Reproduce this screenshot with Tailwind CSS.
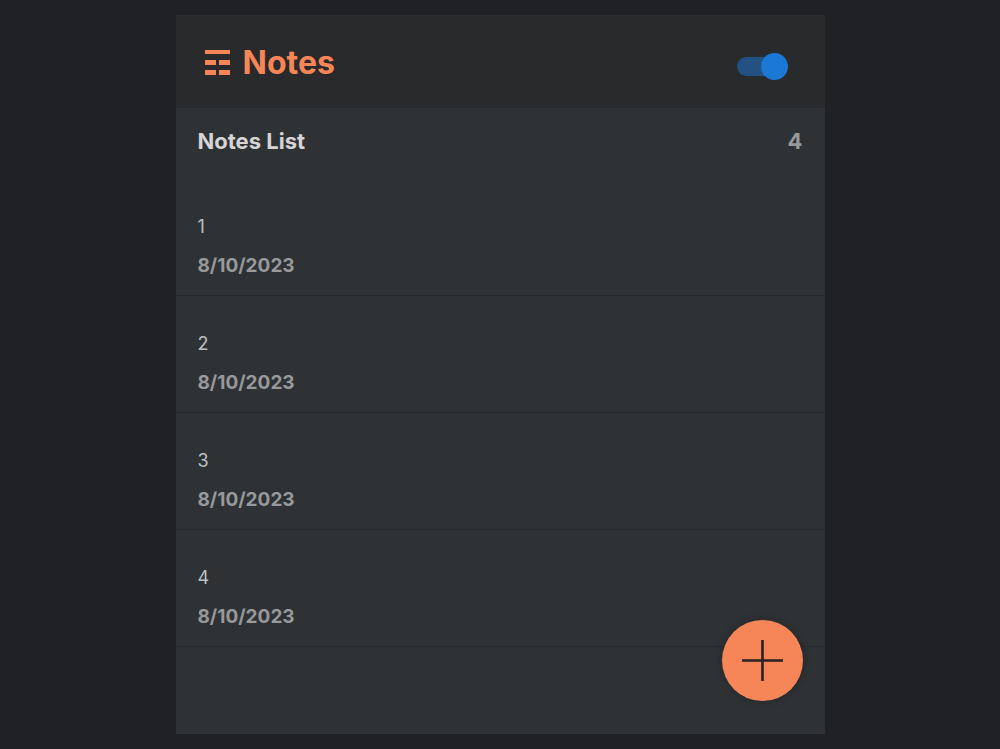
<!DOCTYPE html>
<html lang="en">

<head>
    <meta charset="UTF-8">
    <meta name="viewport" content="width=device-width, initial-scale=1.0">
    <title>Notes</title>
    <script src="https://cdn.jsdelivr.net/npm/@tailwindcss/browser@4"></script>
</head>

<body class="bg-[#1f2124] font-['Inter','Open_Sans',sans-serif] min-h-screen flex justify-center py-[15px]">
    <div class="relative w-full max-w-[649px] bg-[#2e3235] flex flex-col">
        <header class="bg-[#292a2b] h-[93px] pt-[3px] pl-7 pr-9 flex items-center justify-between">
            <h1 class="flex items-center gap-3 text-[32px] leading-10 font-bold text-[#f68657]">
                <svg class="w-[27px] h-[26px]" viewBox="0 0 27 26" fill="currentColor" aria-hidden="true">
                    <path d="M1 0h25v4H1zM1 10h11v5H1zM15 10h11v5H15zM1 20h11v5H1zM15 20h11v5H15z" />
                </svg>
                Notes
            </h1>
            <!-- Dark mode switch -->
            <label class="relative block w-[52px] h-[27px] mt-1.5 cursor-pointer">
                <input type="checkbox" id="theme-switch" checked aria-label="Dark mode"
                    class="peer absolute inset-0 w-full h-full opacity-0 cursor-pointer">
                <span class="absolute left-0 top-1 w-[48px] h-[19px] rounded-full bg-gray-600 peer-checked:bg-[#235282] pointer-events-none"></span>
                <span class="absolute left-0 top-0 size-[27px] rounded-full bg-gray-300 peer-checked:left-6 peer-checked:bg-[#1b78d6] pointer-events-none"></span>
            </label>
        </header>

        <main class="grow">
            <div class="h-[71px] pt-[19px] px-[22px] flex justify-between text-[22px] leading-7 font-bold">
                <h2 class="text-[#d6d4d5]">Notes List</h2>
                <span id="notes-count" class="text-[#97999a]">4</span>
            </div>

            <ul>
                <!-- Note -->
                <li class="px-[22px] pt-[34px] pb-[17px] border-b border-[#272a2d]">
                    <h3 class="text-lg leading-7 text-[#bcc0c4]">1</h3>
                    <p class="mt-[13px] text-[19px] leading-6 font-bold text-[#97999a]">8/10/2023</p>
                </li>
                <li class="px-[22px] pt-[34px] pb-[17px] border-b border-[#272a2d]">
                    <h3 class="text-lg leading-7 text-[#bcc0c4]">2</h3>
                    <p class="mt-[13px] text-[19px] leading-6 font-bold text-[#97999a]">8/10/2023</p>
                </li>
                <li class="px-[22px] pt-[34px] pb-[17px] border-b border-[#272a2d]">
                    <h3 class="text-lg leading-7 text-[#bcc0c4]">3</h3>
                    <p class="mt-[13px] text-[19px] leading-6 font-bold text-[#97999a]">8/10/2023</p>
                </li>
                <li class="px-[22px] pt-[34px] pb-[17px] border-b border-[#272a2d]">
                    <h3 class="text-lg leading-7 text-[#bcc0c4]">4</h3>
                    <p class="mt-[13px] text-[19px] leading-6 font-bold text-[#97999a]">8/10/2023</p>
                </li>
            </ul>
        </main>

        <button type="button" aria-label="Add note" onclick="addNote()"
            class="absolute right-[22px] bottom-[33px] size-[81px] rounded-full bg-[#f68657] text-[#2a2122] shadow-[0_0_8px_rgba(0,0,0,0.25)] flex items-center justify-center cursor-pointer">
            <svg class="size-[41px]" viewBox="0 0 41 41" fill="none" stroke="currentColor" stroke-width="2.6" aria-hidden="true">
                <path d="M20.5 0v41M0 20.5h41" />
            </svg>
        </button>
    </div>

    <script>
        function addNote() {
            const list = document.querySelector('ul');
            const note = list.lastElementChild.cloneNode(true);

            // Number the new note and date it today
            note.querySelector('h3').textContent = list.children.length + 1;
            note.querySelector('p').textContent = new Date().toLocaleDateString('en-US');
            list.appendChild(note);

            document.getElementById('notes-count').textContent = list.children.length;
        }
    </script>
</body>

</html>
